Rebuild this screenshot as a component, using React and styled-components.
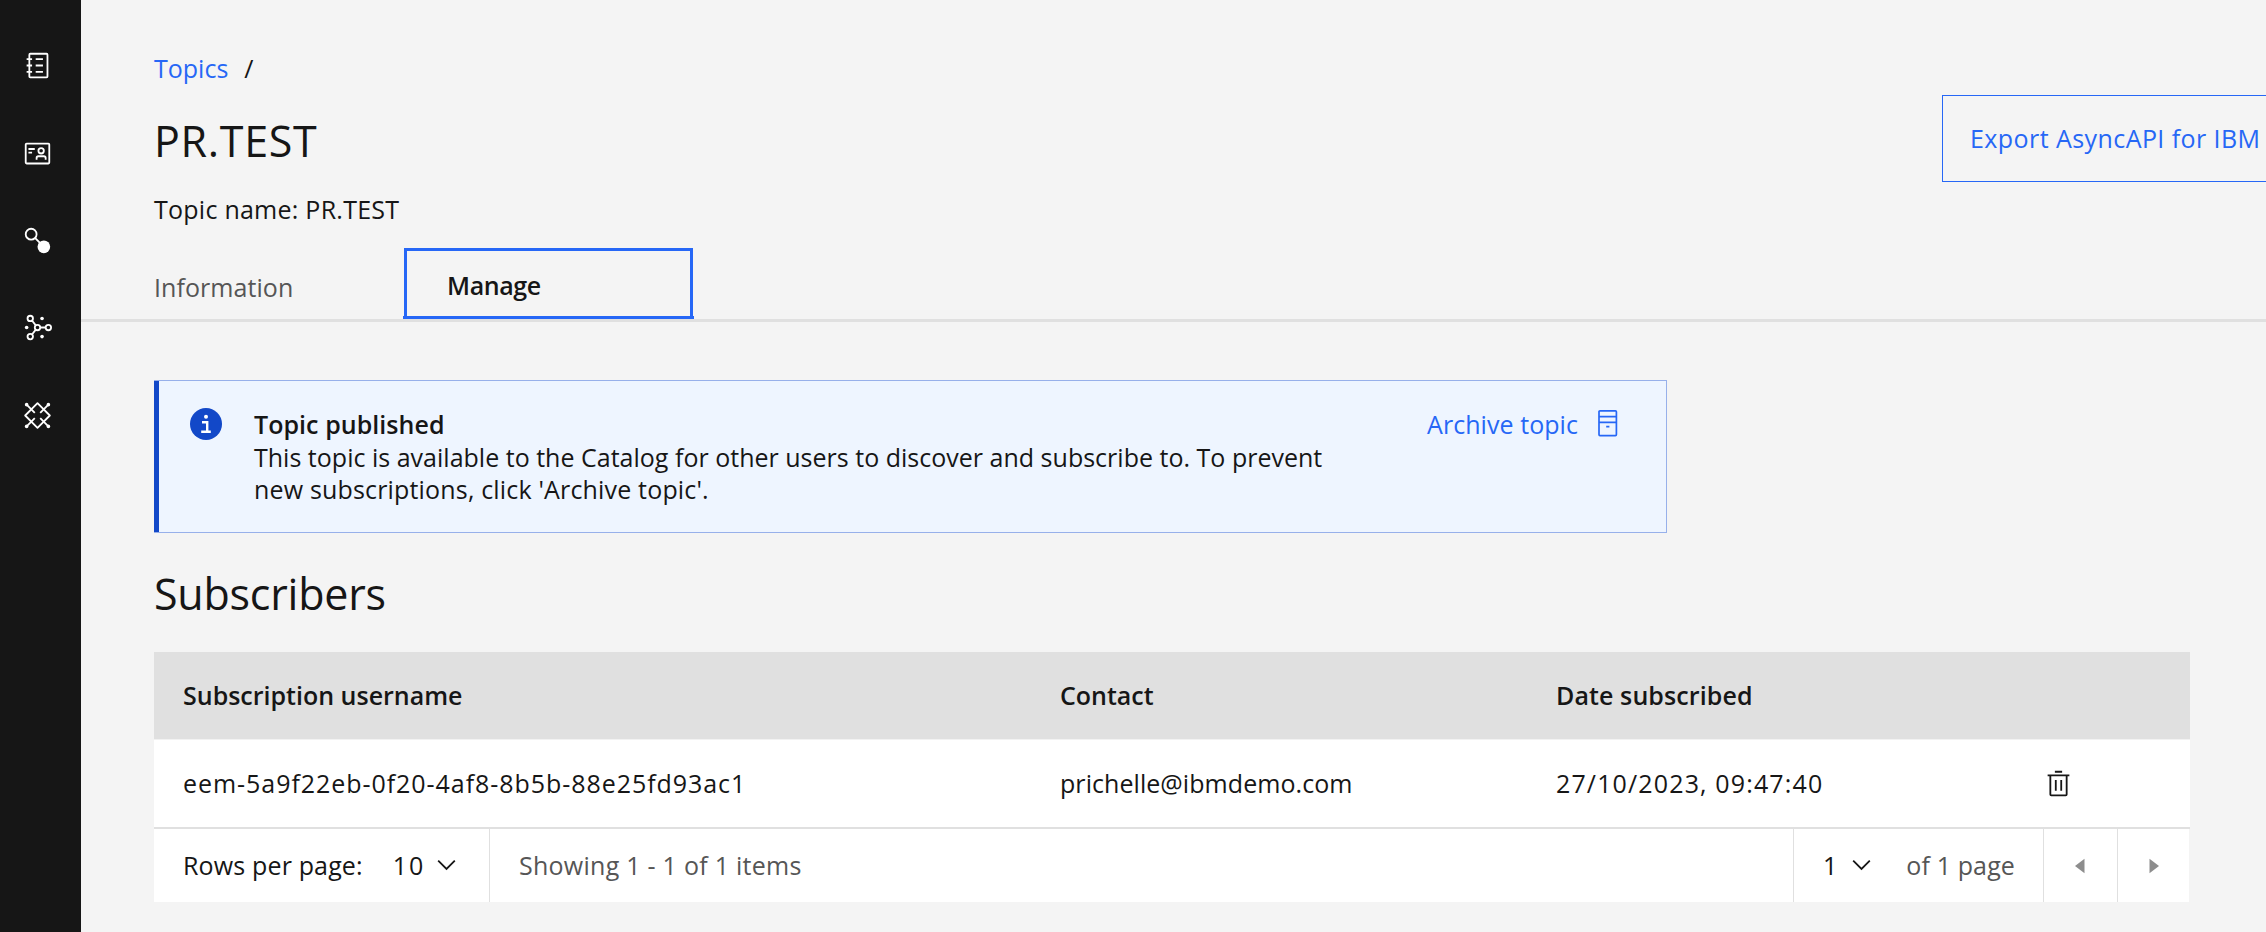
import React from 'react';
import styled, { createGlobalStyle } from 'styled-components';

const blue = '#2667f6';
const ink = '#161616';
const muted = '#565656';
const line = '#e0e0e0';

const GlobalStyle = createGlobalStyle`
  *, *::before, *::after { box-sizing: border-box; }
  body {
    margin: 0;
    overflow: hidden;
    background: #f4f4f4;
    color: ${ink};
    font-family: "Open Sans", "Noto Sans", sans-serif;
    font-size: 25px;
    line-height: 32px;
  }
  h1, h2, p { margin: 0; font-weight: 400; }
  button { font: inherit; color: inherit; background: none; border: 0; padding: 0; }
  svg { display: block; flex: none; }
`;

const Shell = styled.div`
  display: flex;
  width: 2266px;
  height: 932px;
  overflow: hidden;
`;

const Sidebar = styled.nav`
  flex: none;
  width: 81px;
  padding-top: 22px;
  background: #161616;
  color: #fff;
`;

const NavItem = styled.a`
  display: flex;
  align-items: center;
  justify-content: center;
  height: 87.4px;
  padding-right: 6px;
`;

const Main = styled.main`
  flex: 1;
  min-width: 0;
`;

const PageHeader = styled.header`
  display: flex;
  justify-content: space-between;
  height: 322px;
  padding-left: 73px;
  border-bottom: 3px solid ${line};
`;

const HeaderText = styled.div`
  display: flex;
  flex-direction: column;
  padding-top: 52px;
`;

const Label = styled.span`
  white-space: pre;
  letter-spacing: ${(p) => p.$track || 0}px;
`;

const Breadcrumb = styled.div`
  display: flex;
  gap: 16px;
`;

const Link = styled.a`
  color: ${blue};
`;

const Title = styled.h1`
  margin-top: 29px;
  font-size: 43px;
  line-height: 56px;
  letter-spacing: 0.69px;
`;

const TopicName = styled.p`
  margin-top: 24px;
  letter-spacing: 0.25px;
`;

const Tabs = styled.div`
  display: flex;
  margin-top: auto;
  height: 71px;
`;

const Tab = styled.button`
  display: flex;
  align-items: center;
  width: 249px;
  padding-top: 6px;
  color: ${muted};
  text-align: left;
`;

const ActiveTab = styled.button`
  width: 291px;
  border-bottom: 3px solid ${blue};
`;

const FocusRing = styled.span`
  display: flex;
  align-items: center;
  height: 68px;
  margin: 0 1px;
  padding: 2px 0 0 40px;
  border: 3px solid ${blue};
  border-bottom: 0;
  color: ${ink};
  font-weight: 600;
`;

const ExportButton = styled.button`
  align-self: flex-start;
  width: 324px;
  height: 87px;
  margin-top: 95px;
  padding: 0 0 1px 27px;
  border: 1px solid ${blue};
  border-right: 0;
  color: ${blue};
  text-align: left;
`;

const Content = styled.section`
  padding: 58px 76px 0 73px;
`;

const Notification = styled.div`
  display: flex;
  align-items: flex-start;
  width: 1513px;
  height: 153px;
  padding: 27px 42px 0 31px;
  border: 1px solid #97b0ea;
  border-left: 0;
  background: #eef5ff;
  box-shadow: inset 5px 0 0 #1248c8;
  line-height: 32.6px;
`;

const NotificationIcon = styled.div`
  padding: 0 32px 0 5px;
`;

const NotificationBody = styled.div`
  flex: 1;
  display: flex;
  flex-direction: column;
`;

const NotificationTitle = styled.strong`
  font-weight: 600;
  letter-spacing: 0.05px;
`;

const ArchiveAction = styled.button`
  display: flex;
  gap: 16px;
  color: ${blue};
`;

const SectionTitle = styled.h2`
  margin-top: 33px;
  font-size: 43px;
  line-height: 56px;
  letter-spacing: -0.23px;
`;

const Table = styled.div`
  margin-top: 30px;
  width: 2036px;
`;

const Row = styled.div`
  display: grid;
  grid-template-columns: 877px 496px 488px 175px;
  align-items: center;
`;

const HeadRow = styled(Row)`
  height: 87px;
  padding-bottom: 1px;
  background: ${line};
  font-weight: 600;
`;

const BodyRow = styled(Row)`
  height: 90px;
  padding-bottom: 1px;
  background: #fff;
  border-top: 1px solid #f2f2f2;
  border-bottom: 2px solid ${line};
`;

const Cell = styled.div`
  padding-left: 29px;
`;

const Pagination = styled.div`
  display: flex;
  width: 2035px;
  height: 73px;
  background: #fff;
`;

const PageBlock = styled.div`
  display: flex;
  align-items: center;
  width: ${(p) => p.$w}px;
  padding: 0 0 1px ${(p) => p.$pad}px;
  border-right: 1px solid ${line};
  color: ${(p) => (p.$muted ? muted : ink)};
`;

const Select = styled.span`
  display: flex;
  align-items: center;
  gap: ${(p) => p.$gap}px;
  margin-left: ${(p) => p.$ml || 0}px;
`;

const OfPages = styled.span`
  margin-left: 35px;
  color: ${muted};
  letter-spacing: 0.13px;
`;

const PagerButton = styled.button`
  display: flex;
  flex: 1;
  align-items: center;
  justify-content: center;
  padding-right: ${(p) => p.$shift || 0}px;
  color: #8d8d8d;
  & + & { border-left: 1px solid ${line}; }
`;

const Icon = ({ size = 29, children }) => (
  <svg width={size} height={size} viewBox="0 0 32 32" fill="currentColor">{children}</svg>
);

const CatalogIcon = () => (
  <Icon>
    <path d="M26 2H8a2 2 0 0 0-2 2v4H4v2h2v5H4v2h2v5H4v2h2v4a2 2 0 0 0 2 2h18a2 2 0 0 0 2-2V4a2 2 0 0 0-2-2Zm0 26H8v-4h2v-2H8v-5h2v-2H8v-5h2V8H8V4h18Z" />
    <path d="M14 8h8v2h-8zM14 15h8v2h-8zM14 22h8v2h-8z" />
  </Icon>
);

const IdentityIcon = () => (
  <Icon>
    <path d="M28 6v20H4V6h24m0-2H4a2 2 0 0 0-2 2v20a2 2 0 0 0 2 2h24a2 2 0 0 0 2-2V6a2 2 0 0 0-2-2Z" />
    <path d="M6 10h7v2H6zM6 14h4v2H6zM23 18h-6a3 3 0 0 0-3 3v2h2v-2a1 1 0 0 1 1-1h6a1 1 0 0 1 1 1v2h2v-2a3 3 0 0 0-3-3ZM20 17a4 4 0 1 0-4-4 4 4 0 0 0 4 4Zm0-6a2 2 0 1 1-2 2 2 2 0 0 1 2-2Z" />
  </Icon>
);

const ConnectionIcon = () => (
  <Icon>
    <g stroke="currentColor" strokeWidth="2">
      <circle cx="9" cy="9" r="6" fill="none" />
      <path d="M13.2 13.2 19 19" />
    </g>
    <circle cx="23" cy="23" r="7" />
  </Icon>
);

const NetworkIcon = () => (
  <Icon>
    <g stroke="currentColor" strokeWidth="2" fill="none">
      <circle cx="8" cy="6" r="3" />
      <circle cx="8" cy="26" r="3" />
      <circle cx="16" cy="16" r="3" />
      <circle cx="28" cy="16" r="3" />
      <path d="m9.9 8.3 4.2 5.4M9.9 23.7l4.2-5.4M19 16h6" />
    </g>
    <circle cx="21" cy="6" r="2" />
    <circle cx="21" cy="26" r="2" />
    <circle cx="4" cy="16" r="2" />
  </Icon>
);

const MeshIcon = () => (
  <Icon>
    <g stroke="currentColor" strokeWidth="2" fill="none">
      <path d="M16 2.4 29.6 16 16 29.6 2.4 16Z" strokeLinejoin="round" />
      <path d="m4 4 9 9M28 4l-9 9M4 28l9-9M28 28l-9-9" />
    </g>
    <circle cx="4" cy="4" r="2" />
    <circle cx="28" cy="4" r="2" />
    <circle cx="4" cy="28" r="2" />
    <circle cx="28" cy="28" r="2" />
  </Icon>
);

const InfoIcon = () => (
  <svg width="32" height="32" viewBox="0 0 32 32">
    <circle cx="16" cy="16" r="16" fill="#1248c8" />
    <circle cx="16" cy="8.7" r="2" fill="#fff" />
    <path d="M12 14.2h5.2v8.8M11.2 23.8h9.6" fill="none" stroke="#fff" strokeWidth="2.4" />
  </svg>
);

const ArchiveIcon = () => (
  <svg width="30" height="29" viewBox="0 0 30 29" fill="none" stroke="currentColor" strokeWidth="1.7">
    <rect x="5" y="2.8" width="17.4" height="24.8" rx="1" />
    <path d="M5 8.7h17.4M5 14.3h17.4M12.2 18.7h3.2" />
  </svg>
);

const TrashIcon = () => (
  <Icon>
    <path d="M12 12h2v12h-2zM18 12h2v12h-2z" />
    <path d="M4 6v2h2v20a2 2 0 0 0 2 2h16a2 2 0 0 0 2-2V8h2V6ZM8 28V8h16v20ZM12 2h8v2h-8z" />
  </Icon>
);

const Chevron = () => (
  <svg width="19" height="12" viewBox="0 0 19 12" fill="none" stroke="currentColor" strokeWidth="1.8">
    <path d="m1.2 1.6 8.3 8.3 8.3-8.3" />
  </svg>
);

const Caret = ({ d }) => (
  <svg width="10" height="16" viewBox="0 0 10 16" fill="currentColor"><path d={d} /></svg>
);

const navIcons = [CatalogIcon, IdentityIcon, ConnectionIcon, NetworkIcon, MeshIcon];

export default function App() {
  return (
    <Shell>
      <GlobalStyle />
      <Sidebar>
        {navIcons.map((Glyph, i) => (
          <NavItem key={i}><Glyph /></NavItem>
        ))}
      </Sidebar>
      <Main>
        <PageHeader>
          <HeaderText>
            <Breadcrumb>
              <Link>Topics</Link>
              <span>/</span>
            </Breadcrumb>
            <Title>PR.TEST</Title>
            <TopicName>Topic name: PR.TEST</TopicName>
            <Tabs>
              <Tab><Label $track={0.06}>Information</Label></Tab>
              <ActiveTab>
                <FocusRing><Label $track={-0.4}>Manage</Label></FocusRing>
              </ActiveTab>
            </Tabs>
          </HeaderText>
          <ExportButton><Label $track={0.43}>Export AsyncAPI for IBM</Label></ExportButton>
        </PageHeader>
        <Content>
          <Notification>
            <NotificationIcon><InfoIcon /></NotificationIcon>
            <NotificationBody>
              <NotificationTitle>Topic published</NotificationTitle>
              <Label $track={0.01}>This topic is available to the Catalog for other users to discover and subscribe to. To prevent</Label>
              <Label $track={0.17}>new subscriptions, click 'Archive topic'.</Label>
            </NotificationBody>
            <ArchiveAction>
              <Label $track={0.06}>Archive topic</Label>
              <ArchiveIcon />
            </ArchiveAction>
          </Notification>
          <SectionTitle>Subscribers</SectionTitle>
          <Table>
            <HeadRow>
              <Cell><Label>Subscription username</Label></Cell>
              <Cell><Label>Contact</Label></Cell>
              <Cell><Label $track={0.1}>Date subscribed</Label></Cell>
              <Cell />
            </HeadRow>
            <BodyRow>
              <Cell><Label $track={0.95}>eem-5a9f22eb-0f20-4af8-8b5b-88e25fd93ac1</Label></Cell>
              <Cell><Label $track={0.06}>prichelle@ibmdemo.com</Label></Cell>
              <Cell><Label $track={1.14}>27/10/2023, 09:47:40</Label></Cell>
              <Cell><TrashIcon /></Cell>
            </BodyRow>
            <Pagination>
              <PageBlock $w={336} $pad={29}>
                <Label $track={0.15}>Rows per page:</Label>
                <Select $ml={30} $gap={12}><Label $track={2}>10</Label><Chevron /></Select>
              </PageBlock>
              <PageBlock $w={1304} $pad={29} $muted>
                <Label $track={0.26}>Showing 1 - 1 of 1 items</Label>
              </PageBlock>
              <PageBlock $w={250} $pad={29}>
                <Select $gap={15}><span>1</span><Chevron /></Select>
                <OfPages>of 1 page</OfPages>
              </PageBlock>
              <PagerButton $shift={2}><Caret d="M9.5 .8v14.4L0 8Z" /></PagerButton>
              <PagerButton><Caret d="M.5 .8v14.4L10 8Z" /></PagerButton>
            </Pagination>
          </Table>
        </Content>
      </Main>
    </Shell>
  );
}
